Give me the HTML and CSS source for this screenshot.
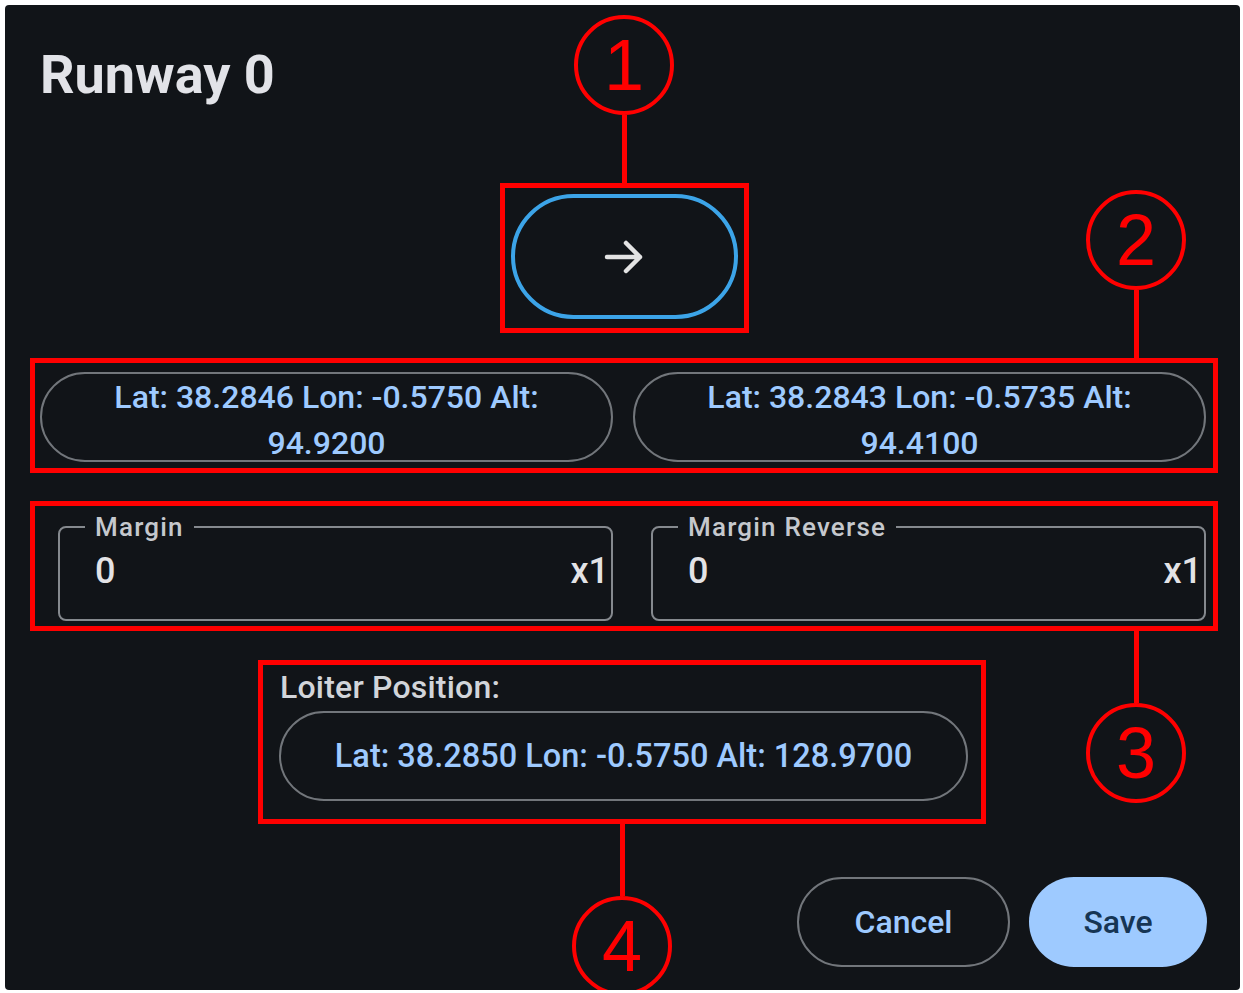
FILE: index.html
```html
<!DOCTYPE html>
<html>
<head>
	<meta charset="utf-8">
	<meta name="viewport" content="width=device-width, initial-scale=1">
	<title>Runway 0</title>
	<link rel="stylesheet" href="styles.css">
</head>
<body>
<div class="dialog">
	<h2 class="title">Runway 0</h2>

	<div class="mark direction">
		<div class="tag tag-top"><span class="num">1</span><span class="stem"></span></div>
		<button class="dir-btn">
			<svg width="40" height="36" viewBox="0 0 40 36">
				<path d="M3 18 H36 M22 4 L36 18 L22 32" fill="none" stroke="#e3e3e3" stroke-width="4.5" stroke-linecap="round" stroke-linejoin="round"/>
			</svg>
		</button>
	</div>

	<div class="mark points">
		<div class="tag tag-top tag-right"><span class="num">2</span><span class="stem"></span></div>
		<button class="pill">Lat: 38.2846 Lon: -0.5750 Alt: 94.9200</button>
		<button class="pill">Lat: 38.2843 Lon: -0.5735 Alt: 94.4100</button>
	</div>

	<div class="mark margins">
		<fieldset class="field">
			<legend>Margin</legend>
			<div class="field-row"><span>0</span><span>x1</span></div>
		</fieldset>
		<fieldset class="field">
			<legend>Margin Reverse</legend>
			<div class="field-row"><span>0</span><span>x1</span></div>
		</fieldset>
		<div class="tag tag-bottom tag-right"><span class="stem"></span><span class="num">3</span></div>
	</div>

	<div class="mark loiter">
		<div class="loiter-label">Loiter Position:</div>
		<button class="pill">Lat: 38.2850 Lon: -0.5750 Alt: 128.9700</button>
		<div class="tag tag-bottom"><span class="stem"></span><span class="num">4</span></div>
	</div>

	<div class="actions">
		<button class="btn-outline">Cancel</button>
		<button class="btn-filled">Save</button>
	</div>
</div>
</body>
</html>
```

FILE: styles.css
```css
* {
	margin: 0px;
	padding: 0px;
	box-sizing: border-box;
}

html, body {
	overflow: hidden;
}

body {
	background: #fff;
	font-family: "Roboto", sans-serif;
}

button {
	font-family: "Roboto", sans-serif;
	background: transparent;
	border: none;
	outline: none;
	cursor: pointer;
}

.dialog {
	margin: 5px 0px 0px 5px;
	width: 1235px;
	height: 985px;
	background: #111418;
	border-radius: 4px;
	padding: 40px 22px 23px 25px;
	display: flex;
	flex-direction: column;
}

.title {
	margin-left: 10px;
	font-size: 54px;
	line-height: 60px;
	font-weight: 700;
	color: #e2e3e8;
}

/* red annotation boxes */
.mark {
	position: relative;
	border: 5px solid #ff0000;
}

.tag {
	position: absolute;
	width: 100px;
	display: flex;
	flex-direction: column;
	align-items: center;
}
.tag-top {
	bottom: 100%;
	left: 50%;
	margin-left: -50px;
}
.tag-bottom {
	top: 100%;
	left: 50%;
	margin-left: -50px;
}
.tag-right {
	left: auto;
	right: 27px;
	margin-left: 0px;
}
.tag .num {
	width: 100px;
	height: 100px;
	border: 4px solid #ff0000;
	border-radius: 50%;
	display: flex;
	align-items: center;
	justify-content: center;
	font-family: "Liberation Sans", Arial, sans-serif;
	font-size: 72px;
	line-height: 1;
	color: #ff0000;
}
.tag .stem {
	width: 5px;
	height: 73px;
	background: #ff0000;
}
.tag-bottom .stem {
	height: 77px;
}

.direction {
	margin-top: 78px;
	align-self: center;
	padding: 6px 6px 9px 6px;
}
.dir-btn {
	width: 227px;
	height: 125px;
	border: 4px solid #3ca4e8;
	border-radius: 63px;
	display: flex;
	align-items: center;
	justify-content: center;
}

.pill {
	height: 90px;
	border: 2px solid #72767b;
	border-radius: 45px;
	padding: 0px 46px;
	font-size: 32px;
	line-height: 46px;
	font-weight: 500;
	color: #9ecaff;
	text-align: center;
}

.points {
	margin-top: 25px;
	padding: 9px 7px 6px 5px;
	display: flex;
	gap: 20px;
}
.points .pill {
	flex: 1;
	padding-bottom: 8px;
}

.margins {
	margin-top: 28px;
	padding: 7px 7px 5px 23px;
	display: flex;
	gap: 38px;
}
.field {
	flex: 1;
	border: 2px solid #85898e;
	border-radius: 8px;
	padding: 5px 2px 23px 35px;
}
.field legend {
	margin-left: -10px;
	padding: 0px 10px;
	font-size: 26px;
	line-height: 28px;
	font-weight: 500;
	letter-spacing: 1.2px;
	color: #c5c8cd;
}
.field-row {
	display: flex;
	justify-content: space-between;
	height: 50px;
	font-size: 36px;
	line-height: 50px;
	font-weight: 500;
	color: #e3e3e6;
}

.loiter {
	margin: 29px 4px 0px 0px;
	align-self: center;
	width: 728px;
	padding: 3px 13px 18px 16px;
}
.loiter-label {
	padding-left: 1px;
	margin-bottom: 5px;
	font-size: 32px;
	line-height: 38px;
	font-weight: 500;
	letter-spacing: 0.2px;
	color: #d2d5da;
}
.loiter .pill {
	width: 100%;
	font-size: 32.5px;
}

.actions {
	margin-top: 53px;
	padding-right: 11px;
	display: flex;
	justify-content: flex-end;
	gap: 19px;
}
.btn-outline, .btn-filled {
	height: 90px;
	border-radius: 45px;
	font-size: 32px;
	font-weight: 500;
}
.btn-outline {
	width: 213px;
	border: 2px solid #72767b;
	color: #9ecaff;
}
.btn-filled {
	width: 178px;
	background: #9ecaff;
	color: #163554;
}
```
